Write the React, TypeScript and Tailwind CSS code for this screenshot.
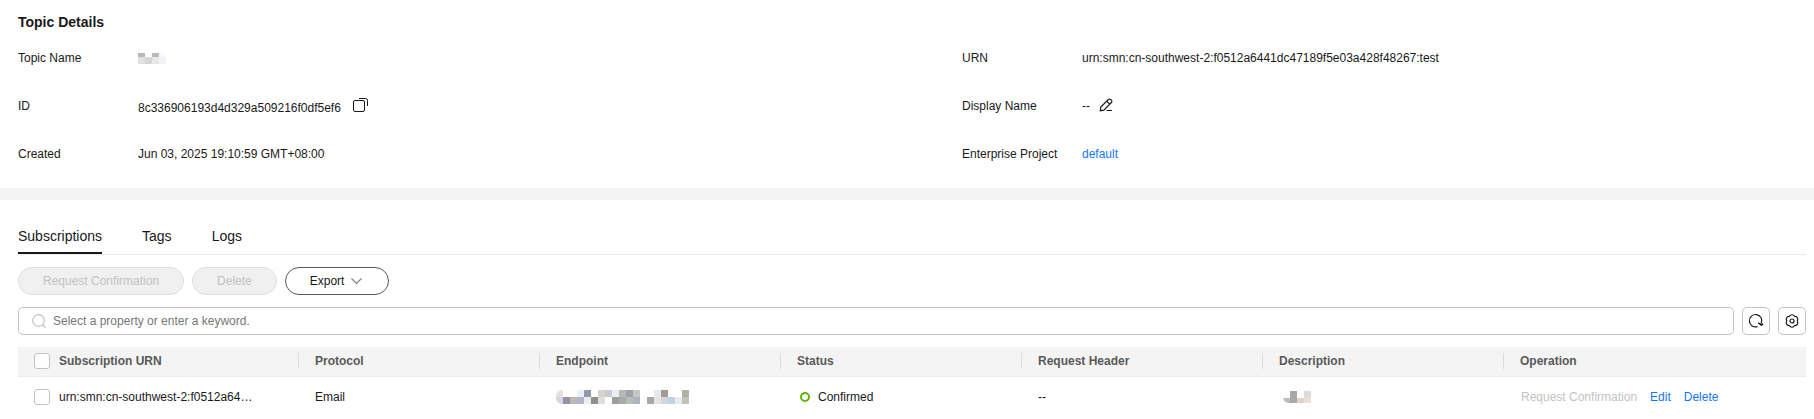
import type { ReactNode } from "react";

const columns = [
  "Subscription URN",
  "Protocol",
  "Endpoint",
  "Status",
  "Request Header",
  "Description",
  "Operation",
];

const tabs = ["Subscriptions", "Tags", "Logs"];

const nameMask = [
  ["#b8b8b8", "", "#b8b8b8", "#f7fafe"],
  ["#e2e2e2", "#d6d6d6", "#e8e8ea", "#eef3f8"],
];

const endpointMask = [
  ["#e8dfdc", "", "", "#ebeff6", "#959ba6", "", "#dbd2cb", "#c8ccd1", "#e9eef5", "#b5bab4", "#9fa3ab", "#c3c8c0", "", "", "#e5e8ee", "#a59b92", "", "", "#b0b3a8"],
  ["#d5d8e2", "#9693a0", "#bdb8b6", "#b2b8c3", "#ebeeef", "#958e8c", "#dedede", "", "#a09d9b", "#a8abad", "#b8beb4", "#adb3c0", "", "#a2aab0", "#e8e3e2", "#d2d6e1", "#c2d2e0", "#e6ecf4", "#c2c3b2"],
];

const descriptionMask = [
  ["", "#aba6a6", "", "#dcdbde"],
  ["#bdbab8", "#a7a9b2", "#dcd3cd", "#f0dfcf"],
];

// Pixelated block that hides a private value
function Mask({
  rows,
  top = 7,
  bottom = 7,
  className,
}: {
  rows: string[][];
  top?: number;
  bottom?: number;
  className?: string;
}) {
  return (
    <svg
      className={className}
      width={rows[0].length * 7}
      height={top + bottom}
      shapeRendering="crispEdges"
      role="img"
      aria-label="Hidden value"
    >
      {rows.map((row, y) =>
        row.map((fill, x) =>
          fill ? (
            <rect
              key={`${x}-${y}`}
              x={x * 7}
              y={y * top}
              width="7"
              height={y ? bottom : top}
              fill={fill}
            />
          ) : null,
        ),
      )}
    </svg>
  );
}

function Detail({ label, children }: { label: string; children: ReactNode }) {
  return (
    <div className="flex h-6 items-center">
      <dt className="w-[120px] shrink-0">{label}</dt>
      <dd className="flex items-center">{children}</dd>
    </div>
  );
}

function CopyIcon() {
  return (
    <svg width="16" height="16" viewBox="0 0 16 16" fill="none" stroke="currentColor">
      <rect x="0.5" y="2.5" width="11" height="11" rx="1.5" />
      <path d="M6 .5h6.5a2 2 0 0 1 2 2V8" />
    </svg>
  );
}

function EditIcon() {
  return (
    <svg width="16" height="16" viewBox="0 0 16 16" fill="none" stroke="currentColor" strokeWidth="1.2">
      <path d="M2.3 12.7l.5-3.6 7.6-7.6a1.6 1.6 0 0 1 2.3 0l.7.7a1.6 1.6 0 0 1 0 2.3l-7.6 7.6zM8.8 3.2l2.9 2.9M8.5 12.5h5.5" />
    </svg>
  );
}

function SearchIcon() {
  return (
    <svg width="16" height="16" viewBox="0 0 16 16" fill="none" stroke="currentColor" strokeWidth="1.2">
      <circle cx="7.5" cy="7.5" r="5.8" />
      <path d="M11.5 11.5l3 3" />
    </svg>
  );
}

function RefreshIcon() {
  return (
    <svg width="16" height="16" viewBox="0 0 16 16" fill="none" stroke="currentColor" strokeWidth="1.2">
      <path d="M9.6 13.6A6.2 6.2 0 1 1 13.3 10.2" />
      <path d="M10.2 10l3.2 1.2 1.8-.2-1.8 1.2z" fill="currentColor" />
    </svg>
  );
}

function SettingsIcon() {
  return (
    <svg width="16" height="16" viewBox="0 0 16 16" fill="none" stroke="currentColor" strokeWidth="1.2">
      <path
        strokeLinejoin="round"
        d="M5.4 3.5A2.8 2.8 0 0 1 10.6 3.5A2.8 2.8 0 0 1 13.2 8A2.8 2.8 0 0 1 10.6 12.5A2.8 2.8 0 0 1 5.4 12.5A2.8 2.8 0 0 1 2.8 8A2.8 2.8 0 0 1 5.4 3.5z"
      />
      <circle cx="8" cy="8" r="2" />
    </svg>
  );
}

function Checkbox({ label }: { label: string }) {
  return (
    <input
      type="checkbox"
      aria-label={label}
      className="block size-4 appearance-none rounded-[3px] border border-[#c2c2c2] bg-white checked:bg-[#191919]"
    />
  );
}

export default function App() {
  return (
    <div className="bg-white font-['Liberation_Sans',Arial,sans-serif] text-xs text-[#191919]">
      <section className="pt-3 pr-2 pb-[22px] pl-[18px]" aria-labelledby="topic-heading">
        <h2 id="topic-heading" className="text-sm font-bold">
          Topic Details
        </h2>
        <dl className="mt-3.5 grid grid-cols-2 gap-x-[100px] gap-y-6">
          <Detail label="Topic Name">
            <Mask rows={nameMask} top={4} />
          </Detail>
          <Detail label="URN">
            urn:smn:cn-southwest-2:f0512a6441dc47189f5e03a428f48267:test
          </Detail>
          <Detail label="ID">
            <span className="pt-1">8c336906193d4d329a509216f0df5ef6</span>
            <button type="button" aria-label="Copy ID" className="ml-3">
              <CopyIcon />
            </button>
          </Detail>
          <Detail label="Display Name">
            <span>--</span>
            <button type="button" aria-label="Edit display name" className="ml-2">
              <EditIcon />
            </button>
          </Detail>
          <Detail label="Created">Jun 03, 2025 19:10:59 GMT+08:00</Detail>
          <Detail label="Enterprise Project">
            <a href="#" className="text-[#1476ff]">
              default
            </a>
          </Detail>
        </dl>
      </section>

      <div className="h-3 bg-[#f4f4f4]" />

      <main className="pt-5 pr-2 pl-[18px]">
        <div role="tablist" className="flex gap-10 border-b border-[#ebebeb] text-sm">
          {tabs.map((tab, i) => (
            <button
              key={tab}
              type="button"
              role="tab"
              aria-selected={i === 0}
              className={`h-[34px] border-b-2 ${i === 0 ? "border-[#191919]" : "border-transparent"}`}
            >
              {tab}
            </button>
          ))}
        </div>

        <div className="mt-3 flex gap-2">
          <button
            type="button"
            disabled
            className="h-7 rounded-full border border-[#dfdfdf] bg-[#f0f0f0] px-6 text-[#c2c2c2]"
          >
            Request Confirmation
          </button>
          <button
            type="button"
            disabled
            className="h-7 rounded-full border border-[#dfdfdf] bg-[#f0f0f0] px-6 text-[#c2c2c2]"
          >
            Delete
          </button>
          <button
            type="button"
            className="flex h-7 items-center gap-1 rounded-full border border-[#595959] px-6"
          >
            Export
            <svg width="16" height="16" viewBox="0 0 16 16" fill="none" stroke="#808080" strokeWidth="1.2">
              <path d="M3.5 5.5l5 5 5-5" />
            </svg>
          </button>
        </div>

        <div className="mt-3 flex gap-2">
          <label className="flex h-7 flex-1 items-center gap-1.5 rounded-[5px] border border-[#c2c2c2] pl-3 text-[#c2c2c2]">
            <SearchIcon />
            <input
              type="text"
              aria-label="Search subscriptions"
              placeholder="Select a property or enter a keyword."
              className="flex-1 text-[#191919] outline-none placeholder:text-[#777777]"
            />
          </label>
          <button
            type="button"
            aria-label="Refresh"
            className="flex size-7 items-center justify-center rounded-[5px] border border-[#c2c2c2]"
          >
            <RefreshIcon />
          </button>
          <button
            type="button"
            aria-label="Settings"
            className="flex size-7 items-center justify-center rounded-[5px] border border-[#c2c2c2]"
          >
            <SettingsIcon />
          </button>
        </div>

        <table className="mt-3 w-full table-fixed text-left">
          <colgroup>
            <col className="w-10" />
            <col />
            <col />
            <col />
            <col />
            <col />
            <col />
            <col className="w-[302px]" />
          </colgroup>
          <thead>
            <tr className="h-[29px] border-b border-[#ebebeb] bg-[#f4f4f4] text-[#595959]">
              <td className="pl-4">
                <Checkbox label="Select all" />
              </td>
              {columns.map((column, i) => (
                <th key={column} scope="col" className="p-0">
                  <div
                    className={`${i === 0 ? "pl-px" : "pl-4"} ${i < 6 ? "border-r border-[#dbdbdb]" : ""}`}
                  >
                    {column}
                  </div>
                </th>
              ))}
            </tr>
          </thead>
          <tbody>
            <tr className="h-[42px]">
              <td className="pl-4">
                <Checkbox label="Select subscription" />
              </td>
              <td className="truncate pl-px">urn:smn:cn-southwest-2:f0512a64…</td>
              <td className="pl-4">Email</td>
              <td className="pl-4">
                <Mask rows={endpointMask} className="rounded-l-md" />
              </td>
              <td className="pl-4">
                <div className="flex items-center gap-2 pl-[3px]">
                  <span className="size-2.5 rounded-full border-2 border-[#5cb300]" />
                  Confirmed
                </div>
              </td>
              <td className="pl-4">--</td>
              <td className="pl-5">
                <Mask rows={descriptionMask} bottom={5} className="rounded-bl-md" />
              </td>
              <td className="pl-[17px]">
                <div className="flex gap-[13px]">
                  <button type="button" disabled className="text-[#c2c2c2]">
                    Request Confirmation
                  </button>
                  <a href="#" className="text-[#1476ff]">
                    Edit
                  </a>
                  <a href="#" className="text-[#1476ff]">
                    Delete
                  </a>
                </div>
              </td>
            </tr>
          </tbody>
        </table>
      </main>
    </div>
  );
}
